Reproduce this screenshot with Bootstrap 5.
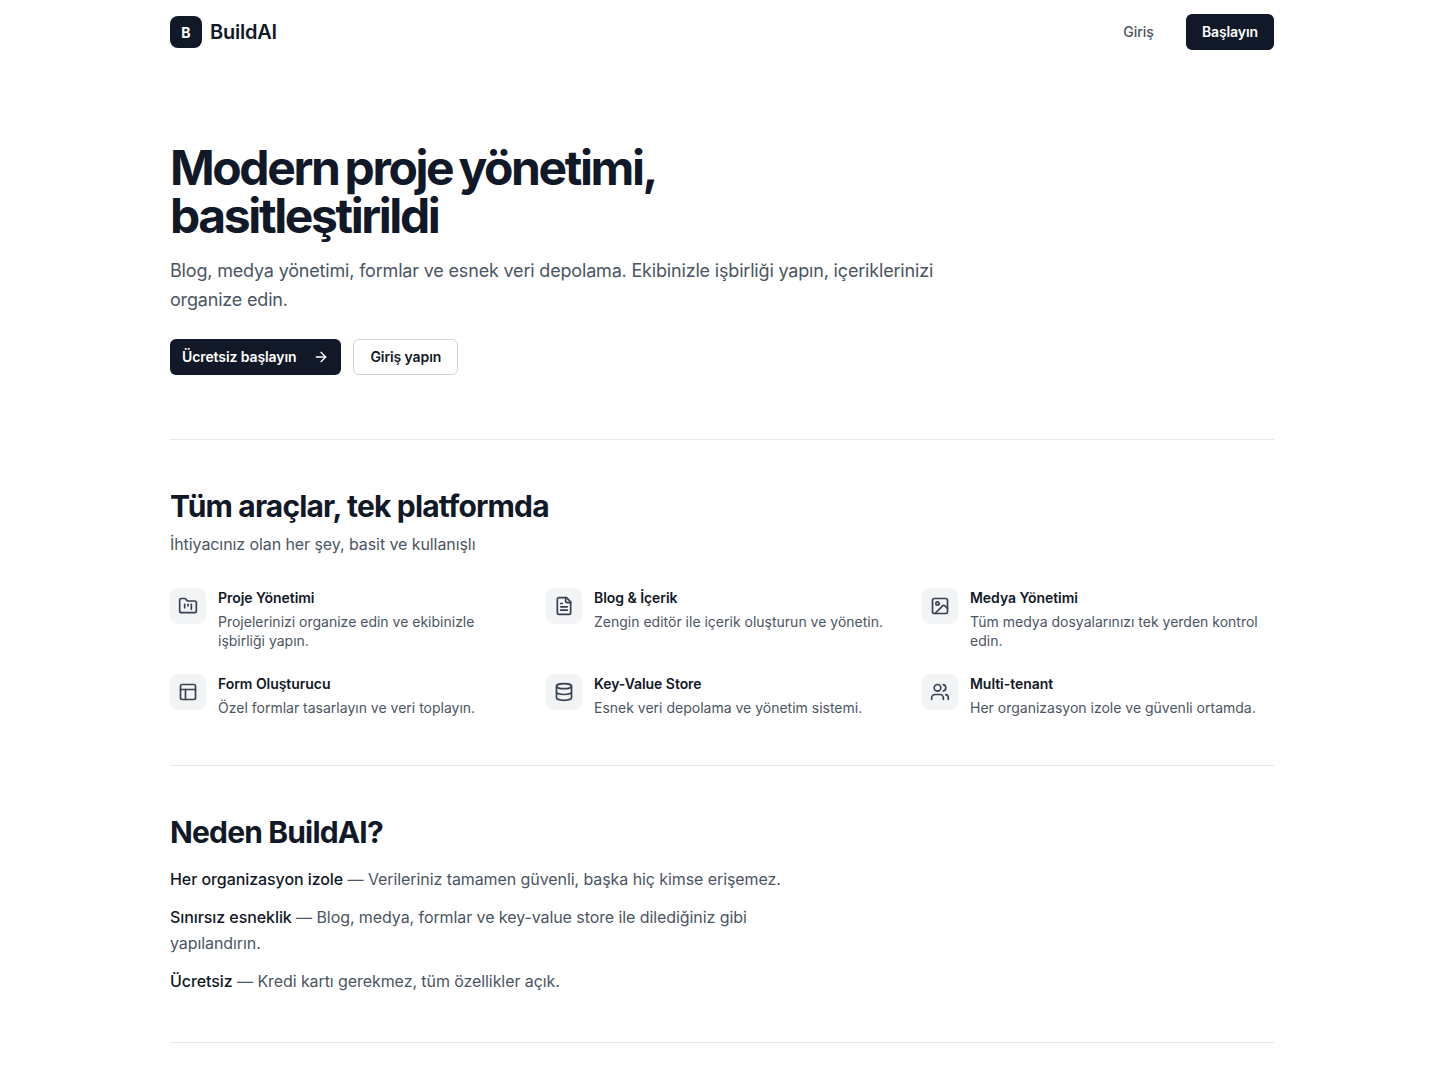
<!DOCTYPE html>
<html lang="tr">
<head>
    <meta charset="UTF-8">
    <title>BuildAI</title>
    <link href="https://cdn.jsdelivr.net/npm/bootstrap@5.3.0/dist/css/bootstrap.min.css" rel="stylesheet">
    <style>
        body {
            font-family: Inter, "Liberation Sans", sans-serif;
            color: #111827;
            background: #fff;
        }
        .page-wrap {
            max-width: 1152px;
            padding: 0 24px;
            margin: 0 auto;
        }
        .top-nav { height: 64px; }
        .brand-box {
            width: 32px;
            height: 32px;
            border-radius: 8px;
            background: #111827;
            color: #fff;
            font-size: 14px;
            font-weight: 700;
        }
        .brand-name {
            font-size: 20px;
            line-height: 28px;
            font-weight: 600;
            letter-spacing: -0.25px;
        }
        .btn-dark-x, .btn-light-x, .btn-plain-x {
            height: 36px;
            font-size: 14px;
            line-height: 20px;
            font-weight: 600;
            letter-spacing: -0.1px;
            border-radius: 6px;
            display: inline-flex;
            align-items: center;
        }
        .btn-dark-x {
            background: #111827;
            color: #fff;
            border: 0;
            padding: 0 16px;
        }
        .btn-dark-x:hover { background: #1f2937; color: #fff; }
        .btn-cta { padding: 0 12px; gap: 8px; }
        .btn-cta svg { margin-left: 9px; }
        .btn-light-x {
            background: #fff;
            color: #111827;
            border: 1px solid #d1d5db;
            padding: 0 15.6px 0 16px;
        }
        .btn-plain-x {
            background: transparent;
            color: #4b5563;
            border: 0;
            padding: 0 16px;
            font-weight: 500;
            letter-spacing: 0;
        }
        .hero-block { padding: 80px 0 64px; }
        .hero-title {
            font-size: 48px;
            line-height: 48px;
            font-weight: 700;
            letter-spacing: -2.4px;
            word-spacing: -2.8px;
            margin-bottom: 16px;
            max-width: 672px;
        }
        .hero-text {
            font-size: 18px;
            line-height: 29.25px;
            letter-spacing: -0.18px;
            color: #4b5563;
            max-width: 768px;
            margin-bottom: 24px;
        }
        .hero-actions { gap: 12px; }
        .section-block {
            padding: 48px 0;
            border-top: 1px solid #e5e7eb;
        }
        .section-end { border-top: 1px solid #e5e7eb; }
        .section-title {
            font-size: 30px;
            line-height: 36px;
            font-weight: 700;
            letter-spacing: -0.84px;
        }
        .section-sub {
            font-size: 16px;
            line-height: 24px;
            letter-spacing: -0.08px;
            color: #4b5563;
            margin: 8px 0 32px;
        }
        .tool-grid {
            display: grid;
            grid-template-columns: repeat(3, 1fr);
            gap: 24px;
        }
        .tool-item { gap: 12px; }
        .tool-icon {
            width: 36px;
            height: 36px;
            flex-shrink: 0;
            border-radius: 8px;
            background: #f3f4f6;
            color: #374151;
        }
        .tool-name {
            font-size: 14px;
            line-height: 20px;
            font-weight: 600;
            letter-spacing: -0.05px;
            margin-bottom: 4px;
        }
        .tool-desc {
            font-size: 14px;
            line-height: 19.25px;
            color: #4b5563;
            margin: 0;
        }
        .why-list { max-width: 640px; margin-top: 16px; }
        .why-item {
            font-size: 16px;
            line-height: 26px;
            letter-spacing: -0.08px;
            color: #4b5563;
            margin-bottom: 12px;
        }
        .why-item:last-child { margin-bottom: 0; }
        .why-item b { font-weight: 500; color: #111827; }
        .lc {
            fill: none;
            stroke: currentColor;
            stroke-width: 2;
            stroke-linecap: round;
            stroke-linejoin: round;
        }
    </style>
</head>
<body>
    <div class="page-wrap">
        <nav class="top-nav d-flex align-items-center justify-content-between">
            <div class="d-flex align-items-center gap-2">
                <span class="brand-box d-flex align-items-center justify-content-center">B</span>
                <span class="brand-name">BuildAI</span>
            </div>
            <div class="d-flex align-items-center gap-3">
                <a class="btn-plain-x text-decoration-none" href="#">Giriş</a>
                <a class="btn-dark-x text-decoration-none" href="#">Başlayın</a>
            </div>
        </nav>

        <section class="hero-block">
            <h1 class="hero-title">Modern proje yönetimi, basitleştirildi</h1>
            <p class="hero-text">Blog, medya yönetimi, formlar ve esnek veri depolama. Ekibinizle işbirliği yapın, içeriklerinizi organize edin.</p>
            <div class="d-flex hero-actions">
                <a class="btn-dark-x btn-cta text-decoration-none" href="#">Ücretsiz başlayın
                    <svg class="lc" width="16" height="16" viewBox="0 0 24 24"><path d="M5 12h14"/><path d="m12 5 7 7-7 7"/></svg>
                </a>
                <a class="btn-light-x text-decoration-none" href="#">Giriş yapın</a>
            </div>
        </section>

        <section class="section-block">
            <h2 class="section-title m-0">Tüm araçlar, tek platformda</h2>
            <p class="section-sub">İhtiyacınız olan her şey, basit ve kullanışlı</p>
            <div class="tool-grid">
                <div class="d-flex align-items-start tool-item">
                    <span class="tool-icon d-flex align-items-center justify-content-center">
                        <svg class="lc" width="20" height="20" viewBox="0 0 24 24"><path d="M4 20h16a2 2 0 0 0 2-2V8a2 2 0 0 0-2-2h-7.93a2 2 0 0 1-1.66-.9l-.82-1.2A2 2 0 0 0 7.93 3H4a2 2 0 0 0-2 2v13c0 1.1.9 2 2 2Z"/><path d="M8 10v4"/><path d="M12 10v2"/><path d="M16 10v6"/></svg>
                    </span>
                    <div>
                        <div class="tool-name">Proje Yönetimi</div>
                        <p class="tool-desc">Projelerinizi organize edin ve ekibinizle işbirliği yapın.</p>
                    </div>
                </div>
                <div class="d-flex align-items-start tool-item">
                    <span class="tool-icon d-flex align-items-center justify-content-center">
                        <svg class="lc" width="20" height="20" viewBox="0 0 24 24"><path d="M15 2H6a2 2 0 0 0-2 2v16a2 2 0 0 0 2 2h12a2 2 0 0 0 2-2V7Z"/><path d="M14 2v4a2 2 0 0 0 2 2h4"/><path d="M10 9H8"/><path d="M16 13H8"/><path d="M16 17H8"/></svg>
                    </span>
                    <div>
                        <div class="tool-name">Blog &amp; İçerik</div>
                        <p class="tool-desc">Zengin editör ile içerik oluşturun ve yönetin.</p>
                    </div>
                </div>
                <div class="d-flex align-items-start tool-item">
                    <span class="tool-icon d-flex align-items-center justify-content-center">
                        <svg class="lc" width="20" height="20" viewBox="0 0 24 24"><rect x="3" y="3" width="18" height="18" rx="2"/><circle cx="9" cy="9" r="2"/><path d="m21 15-3.086-3.086a2 2 0 0 0-2.828 0L6 21"/></svg>
                    </span>
                    <div>
                        <div class="tool-name">Medya Yönetimi</div>
                        <p class="tool-desc">Tüm medya dosyalarınızı tek yerden kontrol edin.</p>
                    </div>
                </div>
                <div class="d-flex align-items-start tool-item">
                    <span class="tool-icon d-flex align-items-center justify-content-center">
                        <svg class="lc" width="20" height="20" viewBox="0 0 24 24"><rect x="3" y="3" width="18" height="18" rx="2"/><path d="M3 9h18"/><path d="M9 21V9"/></svg>
                    </span>
                    <div>
                        <div class="tool-name">Form Oluşturucu</div>
                        <p class="tool-desc">Özel formlar tasarlayın ve veri toplayın.</p>
                    </div>
                </div>
                <div class="d-flex align-items-start tool-item">
                    <span class="tool-icon d-flex align-items-center justify-content-center">
                        <svg class="lc" width="20" height="20" viewBox="0 0 24 24"><ellipse cx="12" cy="5" rx="9" ry="3"/><path d="M3 5V19A9 3 0 0 0 21 19V5"/><path d="M3 12A9 3 0 0 0 21 12"/></svg>
                    </span>
                    <div>
                        <div class="tool-name">Key-Value Store</div>
                        <p class="tool-desc">Esnek veri depolama ve yönetim sistemi.</p>
                    </div>
                </div>
                <div class="d-flex align-items-start tool-item">
                    <span class="tool-icon d-flex align-items-center justify-content-center">
                        <svg class="lc" width="20" height="20" viewBox="0 0 24 24"><path d="M16 21v-2a4 4 0 0 0-4-4H6a4 4 0 0 0-4 4v2"/><circle cx="9" cy="7" r="4"/><path d="M22 21v-2a4 4 0 0 0-3-3.87"/><path d="M16 3.13a4 4 0 0 1 0 7.75"/></svg>
                    </span>
                    <div>
                        <div class="tool-name">Multi-tenant</div>
                        <p class="tool-desc">Her organizasyon izole ve güvenli ortamda.</p>
                    </div>
                </div>
            </div>
        </section>

        <section class="section-block">
            <h2 class="section-title m-0">Neden BuildAI?</h2>
            <div class="why-list">
                <p class="why-item"><b>Her organizasyon izole</b> — Verileriniz tamamen güvenli, başka hiç kimse erişemez.</p>
                <p class="why-item"><b>Sınırsız esneklik</b> — Blog, medya, formlar ve key-value store ile dilediğiniz gibi yapılandırın.</p>
                <p class="why-item"><b>Ücretsiz</b> — Kredi kartı gerekmez, tüm özellikler açık.</p>
            </div>
        </section>
        <div class="section-end"></div>
    </div>
</body>
</html>
